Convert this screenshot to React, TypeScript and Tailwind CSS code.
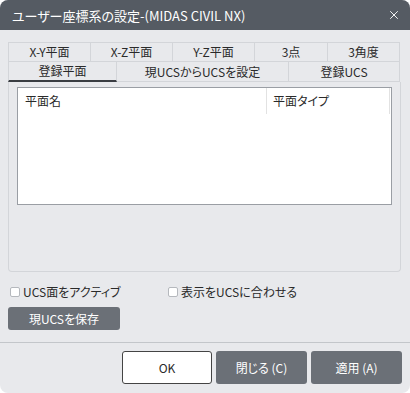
import { X } from 'lucide-react';

export default function App() {
  const row1 = [
    { label: 'X-Y平面', w: 'w-[83px]' },
    { label: 'X-Z平面', w: 'w-[82px]' },
    { label: 'Y-Z平面', w: 'w-[82px]' },
    { label: '3点', w: 'w-[73px]' },
    { label: '3角度', w: 'w-[72px]' },
  ];
  const row2 = [
    { label: '登録平面', w: 'w-[109px]', active: true },
    { label: '現UCSからUCSを設定', w: 'w-[172px]' },
    { label: '登録UCS', w: 'w-[111px]' },
  ];

  return (
    <div className="w-[410px] h-[393px] bg-white font-['Noto_Sans_CJK_JP',sans-serif] [font-feature-settings:'palt'] text-[12px] text-[#2a2a2a]">
      <div className="w-full h-full rounded-lg overflow-hidden bg-[#e8e9ec] flex flex-col">
        {/* Title bar */}
        <div className="h-[30px] bg-[#555b63] flex items-center justify-between pl-3 pr-[9px] text-white shrink-0">
          <span className="text-[13px] leading-none">ユーザー座標系の設定-(MIDAS CIVIL NX)</span>
          <X className="w-[14px] h-[14px]" strokeWidth={1.6} />
        </div>

        <div className="px-2 pt-3">
          {/* Tabs */}
          <div className="flex h-[20px]">
            {row1.map((t, i) => (
              <div
                key={i}
                className={`${t.w} border border-[#d3d5d9] ${i > 0 ? 'border-l-0' : ''} flex items-center justify-center leading-none`}
              >
                {t.label}
              </div>
            ))}
          </div>
          <div className="flex h-[20px]">
            {row2.map((t, i) => (
              <div
                key={i}
                className={`${t.w} border-x border-[#d3d5d9] ${i > 0 ? 'border-l-0' : ''} ${
                  t.active ? 'border-b-2 border-b-[#3a3d42]' : 'border-b border-b-[#d3d5d9]'
                } flex items-center justify-center leading-none`}
              >
                {t.label}
              </div>
            ))}
          </div>

          {/* Panel */}
          <div className="w-[393px] h-[190px] border border-t-0 border-[#d3d5d9] rounded-b-[4px] pt-[5px] pl-2">
            <div className="w-[375px] h-[118px] bg-white border border-[#9a9ea4]">
              <div className="flex h-[26px]">
                <div className="w-[249px] border-r border-[#e2e2e2] pl-[7px] flex items-center">平面名</div>
                <div className="w-[123px] border-r border-[#e2e2e2] pl-[6px] flex items-center">平面タイプ</div>
              </div>
            </div>
          </div>

          {/* Options */}
          <div className="flex items-center mt-[15px] h-[10px]">
            <label className="flex items-center gap-[3px] w-[160px] pl-[2px]">
              <span className="w-[10px] h-[10px] bg-white border border-[#b5b8bd] rounded-[2px]" />
              <span className="leading-none">UCS面をアクティブ</span>
            </label>
            <label className="flex items-center gap-[3px]">
              <span className="w-[10px] h-[10px] bg-white border border-[#b5b8bd] rounded-[2px]" />
              <span className="leading-none">表示をUCSに合わせる</span>
            </label>
          </div>

          <button className="mt-[10px] w-[112px] h-[23px] bg-[#6b7077] text-white rounded-[3px] flex items-center justify-center leading-none">
            現UCSを保存
          </button>
        </div>

        <div className="mt-[12px] h-px bg-[#c3c6ca]" />

        <div className="flex justify-end gap-1 pt-[8px] pr-2">
          <button className="w-[90px] h-[33px] bg-white border border-[#444] rounded-[3px] flex items-center justify-center leading-none">
            OK
          </button>
          <button className="w-[91px] h-[33px] bg-[#6b7077] text-white rounded-[3px] flex items-center justify-center leading-none">
            閉じる (C)
          </button>
          <button className="w-[91px] h-[33px] bg-[#6b7077] text-white rounded-[3px] flex items-center justify-center leading-none">
            適用 (A)
          </button>
        </div>
      </div>
    </div>
  );
}
